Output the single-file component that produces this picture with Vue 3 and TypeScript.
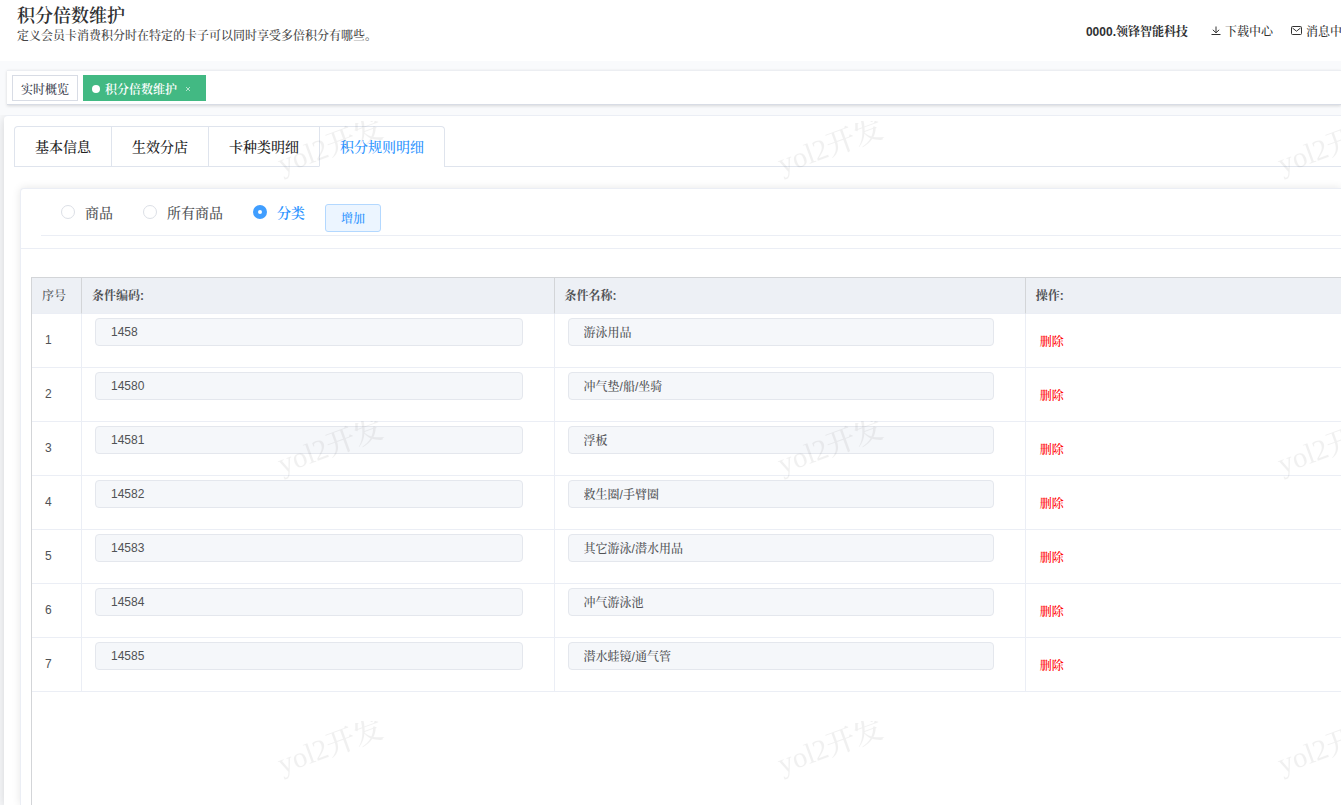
<script setup lang="ts">
import { ref } from 'vue'

interface Rule {
  code: string
  name: string
}

const tabs: string[] = ['基本信息', '生效分店', '卡种类明细', '积分规则明细']
const activeTab = ref('积分规则明细')

const scopes: string[] = ['商品', '所有商品', '分类']
const scope = ref('分类')

const rules = ref<Rule[]>([
  { code: '1458', name: '游泳用品' },
  { code: '14580', name: '冲气垫/船/坐骑' },
  { code: '14581', name: '浮板' },
  { code: '14582', name: '救生圈/手臂圈' },
  { code: '14583', name: '其它游泳/潜水用品' },
  { code: '14584', name: '冲气游泳池' },
  { code: '14585', name: '潜水蛙镜/通气管' },
])

function removeRule(index: number) {
  rules.value.splice(index, 1)
}

function addRule() {
  rules.value.push({ code: '', name: '' })
}
</script>

<template>
  <div class="page">
    <header class="top">
      <div class="heading">
        <h1>积分倍数维护</h1>
        <p>定义会员卡消费积分时在特定的卡子可以同时享受多倍积分有哪些。</p>
      </div>
      <nav class="links">
        <strong>0000.领锋智能科技</strong>
        <a href="#">
          <svg width="12" height="12" viewBox="0 0 12 12" fill="none" stroke="currentColor">
            <path d="M6 1.5v6M2.8 4.8L6 7.8l3.2-3M1.5 9.5h9" />
          </svg>
          下载中心
        </a>
        <a href="#">
          <svg width="12" height="12" viewBox="0 0 12 12" fill="none" stroke="currentColor">
            <rect x="0.5" y="1.5" width="10" height="8" rx="1" />
            <path d="M1.5 3L5.5 6.2 9.5 3" />
          </svg>
          消息中
        </a>
      </nav>
    </header>

    <nav class="views">
      <a class="view" href="#">实时概览</a>
      <a class="view current" href="#">
        <i class="dot"></i><span>积分倍数维护</span>
        <svg class="close" width="6" height="6" viewBox="0 0 6 6" stroke="currentColor">
          <path d="M1 1l4 4M5 1L1 5" />
        </svg>
      </a>
    </nav>

    <main class="main">
      <div class="tabs" role="tablist">
        <div class="tab-group">
          <button
            v-for="tab in tabs"
            :key="tab"
            type="button"
            role="tab"
            class="tab"
            :class="{ active: tab === activeTab }"
            :aria-selected="tab === activeTab"
            @click="activeTab = tab"
          >{{ tab }}</button>
        </div>
      </div>

      <section class="card">
        <div class="card-head">
          <div class="filters">
            <label v-for="item in scopes" :key="item" class="radio">
              <input v-model="scope" type="radio" name="scope" :value="item" />
              <span>{{ item }}</span>
            </label>
            <button type="button" class="add" @click="addRule">增加</button>
          </div>
        </div>

        <div class="table-box">
          <table>
            <colgroup>
              <col class="col-index" />
              <col class="col-code" />
              <col class="col-name" />
              <col />
            </colgroup>
            <thead>
              <tr>
                <th class="plain">序号</th>
                <th>条件编码:</th>
                <th>条件名称:</th>
                <th>操作:</th>
              </tr>
            </thead>
            <tbody>
              <tr v-for="(rule, i) in rules" :key="i">
                <td class="index">{{ i + 1 }}</td>
                <td class="field"><input v-model="rule.code" type="text" disabled aria-label="条件编码" /></td>
                <td class="field name"><input v-model="rule.name" type="text" disabled aria-label="条件名称" /></td>
                <td class="action"><button type="button" @click="removeRule(i)">删除</button></td>
              </tr>
            </tbody>
          </table>
        </div>
      </section>
    </main>

    <svg class="watermark" aria-hidden="true">
      <defs>
        <pattern id="mark" x="200" y="121" width="500" height="300" patternUnits="userSpaceOnUse">
          <text x="82" y="53" transform="rotate(-20 82 53)">yol2开发</text>
        </pattern>
      </defs>
      <rect width="100%" height="100%" fill="url(#mark)" />
    </svg>
  </div>
</template>

<style>
body {
  margin: 0;
}
</style>

<style scoped>
* {
  box-sizing: border-box;
}

.page {
  position: relative;
  display: flex;
  flex-direction: column;
  min-height: 100vh;
  overflow: hidden;
  background: #f9fafc;
  color: #505255;
  font-family: "Liberation Sans", "Noto Serif CJK SC", "Noto Sans CJK SC", sans-serif;
  font-size: 12px;
  font-weight: 500;
}

button,
input {
  font-family: inherit;
  font-size: 12px;
  font-weight: 500;
}

a {
  color: inherit;
  text-decoration: none;
}

.top {
  display: flex;
  justify-content: space-between;
  height: 61px;
  padding-left: 17px;
  background: #fff;
}

.heading {
  padding-top: 5px;
}

h1 {
  margin: 0;
  color: #303133;
  font-size: 18px;
  font-weight: 600;
  line-height: 22px;
}

.heading p {
  margin: 0;
  color: #444;
  line-height: 18px;
}

.links {
  display: flex;
  flex-shrink: 0;
  align-items: center;
  margin-right: -1px;
  white-space: nowrap;
  color: #333;
}

.links strong {
  margin-right: 22px;
  color: #303133;
}

.links a {
  display: flex;
  align-items: center;
  gap: 3px;
}

.links a + a {
  margin-left: 18px;
}

.views {
  display: flex;
  align-items: center;
  gap: 5px;
  height: 35px;
  margin: 9px 0 0 7px;
  padding-left: 5px;
  background: #fff;
  border-top: 1px solid #eceef2;
  border-bottom: 1px solid #d8dce5;
  box-shadow: 0 1px 3px rgba(0, 0, 0, 0.14);
}

.view {
  display: flex;
  align-items: center;
  height: 26px;
  padding: 2px 8px 0;
  border: 1px solid #d8dce5;
  color: #3c4250;
}

.view.current {
  padding-right: 14px;
  border-color: #42b983;
  background: #42b983;
  color: #fff;
}

.view.current span {
  font-weight: 600;
}

.dot {
  width: 8px;
  height: 8px;
  margin-right: 5px;
  border-radius: 50%;
  background: #fff;
}

.close {
  margin-left: 8px;
  opacity: 0.6;
}

.main {
  display: flex;
  flex: 1;
  flex-direction: column;
  margin: 10px 0 0 4px;
  padding: 10px 0 0 10px;
  border-top: 1px solid #ebeef5;
  border-top-left-radius: 4px;
  background: #fff;
  box-shadow: 0 2px 12px rgba(0, 0, 0, 0.16);
  clip-path: inset(0 0 0 -4px);
}

.tabs {
  display: flex;
  border-bottom: 1px solid #dfe4ed;
}

.tab-group {
  display: flex;
  margin-bottom: -1px;
  border: 1px solid #dfe4ed;
  border-bottom: 0;
  border-radius: 4px 4px 0 0;
}

.tab {
  height: 40px;
  padding: 0 20px 1px;
  border: 0;
  border-bottom: 1px solid #dfe4ed;
  background: none;
  color: #222;
  font-size: 14px;
}

.tab + .tab {
  border-left: 1px solid #dfe4ed;
}

.tab.active {
  border-bottom-color: #fff;
  color: #2b93ff;
}

.card {
  display: flex;
  flex: 1;
  flex-direction: column;
  margin: 21px 0 0 6px;
  border: 1px solid #ebeef5;
  border-width: 1px 0 0 1px;
  border-top-left-radius: 4px;
  background: #fff;
  box-shadow: 0 0 8px rgba(0, 0, 0, 0.1);
}

.card-head {
  padding: 0 0 12px 20px;
  border-bottom: 1px solid #ebeef5;
}

.filters {
  display: flex;
  align-items: flex-start;
  height: 47px;
  padding: 13px 0 0 20px;
  border-bottom: 1px solid #ebeef5;
}

.radio {
  display: flex;
  align-items: center;
  gap: 10px;
  height: 20px;
  margin-right: 30px;
  font-size: 14px;
}

.radio input {
  width: 14px;
  height: 14px;
  margin: 0;
  border: 1px solid #dcdfe6;
  border-radius: 50%;
  appearance: none;
  background: #fff;
}

.radio input:checked {
  border: 5px solid #409eff;
}

.radio input:checked + span {
  color: #2b93ff;
  font-weight: 600;
}

.add {
  width: 56px;
  height: 28px;
  margin: 2px 0 0 -10px;
  padding: 0 0 2px;
  border: 1px solid #b3d8ff;
  border-radius: 3px;
  background: #ecf5ff;
  color: #2b93ff;
}

.table-box {
  flex: 1;
  margin: 28px 0 0 10px;
  border-top: 1px solid #d3d5d8;
  border-left: 1px solid #d3d5d8;
}

table {
  width: 100%;
  border-collapse: separate;
  border-spacing: 0;
  table-layout: fixed;
}

.col-index {
  width: 50px;
}

.col-code {
  width: 36.1%;
}

.col-name {
  width: 36%;
}

th {
  height: 36px;
  padding: 0 10px 2px;
  border-right: 1px solid #d3d5d8;
  border-bottom: 1px solid #ebeef5;
  background: #edf0f5;
  text-align: left;
}

th.plain {
  font-weight: 500;
}

td {
  height: 54px;
  padding: 0;
  border-right: 1px solid #ebeef5;
  border-bottom: 1px solid #ebeef5;
}

th:last-child,
td:last-child {
  border-right: 0;
}

.index {
  padding: 0 0 2px 13px;
}

.field {
  padding: 4px 31px 0 13px;
  vertical-align: top;
}

.field input {
  display: block;
  width: 100%;
  height: 28px;
  padding: 0 15px;
  border: 1px solid #e4e7ed;
  border-radius: 4px;
  background: #f5f7fa;
  color: #505255;
}

.field.name input {
  padding-bottom: 2px;
}

.action button {
  margin-left: 14px;
  padding: 0;
  border: 0;
  background: none;
  color: #f00;
}

.watermark {
  position: absolute;
  inset: 0;
  width: 100%;
  height: 100%;
  pointer-events: none;
}

.watermark text {
  fill: rgba(0, 0, 0, 0.06);
  font-family: "Liberation Serif", "Noto Serif CJK SC", "Noto Sans CJK SC", serif;
  font-size: 29px;
  font-weight: 500;
}
</style>
